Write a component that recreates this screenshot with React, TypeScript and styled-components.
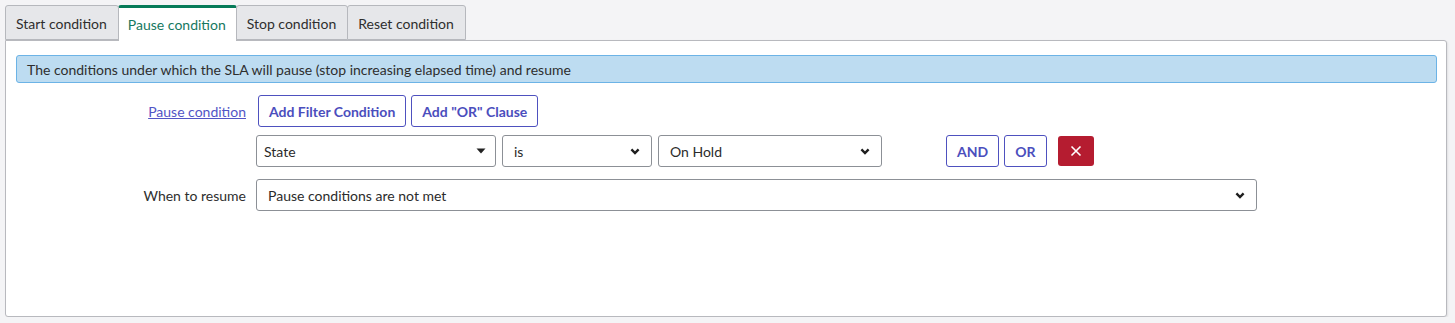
import React from "react";
import styled, { createGlobalStyle } from "styled-components";

const GlobalStyle = createGlobalStyle`
  html, body {
    margin: 0;
    padding: 0;
    background: #f4f4f6;
    font-family: Lato, "Open Sans", sans-serif;
    font-size: 14px;
    color: #2e2e2e;
  }
`;

const tabs = ["Start condition", "Pause condition", "Stop condition", "Reset condition"];

const Page = styled.div`
  padding: 5px 8px 0 5px;
`;

const TabBar = styled.div`
  display: flex;
  position: relative;
  z-index: 1;
`;

const Tab = styled.div<{ active?: boolean }>`
  box-sizing: border-box;
  padding: ${(p) => (p.active ? "0 10px 0 9px" : "2px 11px 0 10px")};
  display: flex;
  align-items: center;
  font-size: 14px;
  border: 1px solid #b6b8bd;
  border-bottom: ${(p) => (p.active ? "none" : "1px solid #b6b8bd")};
  border-top: ${(p) => (p.active ? "3px solid #067a58" : "1px solid #b6b8bd")};
  border-radius: 3px 3px 0 0;
  margin-right: -1px;
  background: ${(p) => (p.active ? "#ffffff" : "#e6e7ea")};
  color: ${(p) => (p.active ? "#16785f" : "#2e2e2e")};
  height: ${(p) => (p.active ? "36px" : "35px")};
`;

const Panel = styled.div`
  margin-top: -1px;
  height: 277px;
  box-sizing: border-box;
  background: #ffffff;
  border: 1px solid #b8b9be;
  border-radius: 0 3px 3px 3px;
  box-shadow: 1px 1px 2px rgba(0, 0, 0, 0.08);
  padding: 14px 9px 0 10px;
`;

const InfoBar = styled.div`
  height: 28px;
  box-sizing: border-box;
  background: #bddcf1;
  border: 1px solid #6cb3e6;
  border-radius: 3px;
  display: flex;
  align-items: center;
  padding-left: 10px;
  margin-bottom: 12px;
`;

const Row = styled.div<{ gap?: number }>`
  display: grid;
  grid-template-columns: 230px 1fr;
  column-gap: 10px;
  align-items: center;
  margin-bottom: ${(p) => p.gap ?? 0}px;
`;

const Label = styled.div`
  text-align: right;
`;

const Link = styled.a`
  text-align: right;
  color: #5255c6;
  text-decoration: underline;
  cursor: pointer;
`;

const Controls = styled.div`
  display: flex;
  align-items: center;
`;

const OutlineButton = styled.button<{ ml?: number }>`
  height: 32px;
  box-sizing: border-box;
  padding: 0 10px;
  margin-left: ${(p) => p.ml ?? 0}px;
  border: 1px solid #4e51bf;
  border-radius: 3px;
  background: #ffffff;
  color: #4b4ebd;
  font-family: Lato, sans-serif;
  font-size: 14px;
  font-weight: 700;
`;

const DeleteButton = styled.button`
  width: 36px;
  height: 30px;
  margin-left: 11px;
  border: none;
  border-radius: 3px;
  background: #b51c30;
  display: flex;
  align-items: center;
  justify-content: center;
  padding: 0;
`;

const SelectBox = styled.div<{ w: number; pl?: number; pr?: number; ml?: number }>`
  width: ${(p) => p.w}px;
  height: 32px;
  box-sizing: border-box;
  margin-left: ${(p) => p.ml ?? 0}px;
  border: 1px solid #8c9096;
  border-radius: 3px;
  background: #ffffff;
  display: flex;
  align-items: center;
  justify-content: space-between;
  padding: 0 ${(p) => p.pr ?? 11}px 0 ${(p) => p.pl ?? 11}px;
  color: #2b2b2b;
`;

const Chevron = () => (
  <svg width="10" height="7" viewBox="0 0 10 7">
    <path d="M1.4 1.4 L5 5 L8.6 1.4" fill="none" stroke="#1e1e1e" strokeWidth="2.4" />
  </svg>
);

const Caret = () => (
  <svg width="10" height="6" viewBox="0 0 10 6">
    <path d="M0.5 0.5 H9.5 L5 5.5 Z" fill="#222" />
  </svg>
);

const Cross = () => (
  <svg width="12" height="12" viewBox="0 0 12 12">
    <path d="M1.5 1.5 L10.5 10.5 M10.5 1.5 L1.5 10.5" stroke="#fff" strokeWidth="1.6" />
  </svg>
);

const App: React.FC = () => {
  return (
    <Page>
      <GlobalStyle />
      <TabBar>
        {tabs.map((t) => (
          <Tab key={t} active={t === "Pause condition"}>
            {t}
          </Tab>
        ))}
      </TabBar>
      <Panel>
        <InfoBar>
          The conditions under which the SLA will pause (stop increasing elapsed time) and resume
        </InfoBar>
        <Row gap={8}>
          <Link>Pause condition</Link>
          <Controls>
            <OutlineButton ml={2}>Add Filter Condition</OutlineButton>
            <OutlineButton ml={5}>Add "OR" Clause</OutlineButton>
          </Controls>
        </Row>
        <Row gap={12}>
          <div />
          <Controls>
            <SelectBox w={240} pl={7} pr={9}>
              State
              <Caret />
            </SelectBox>
            <SelectBox w={150} ml={6}>
              is
              <Chevron />
            </SelectBox>
            <SelectBox w={224} ml={6}>
              On Hold
              <Chevron />
            </SelectBox>
            <OutlineButton ml={64}>AND</OutlineButton>
            <OutlineButton ml={5}>OR</OutlineButton>
            <DeleteButton>
              <Cross />
            </DeleteButton>
          </Controls>
        </Row>
        <Row>
          <Label>When to resume</Label>
          <Controls>
            <SelectBox w={1001}>
              Pause conditions are not met
              <Chevron />
            </SelectBox>
          </Controls>
        </Row>
      </Panel>
    </Page>
  );
};

export default App;
